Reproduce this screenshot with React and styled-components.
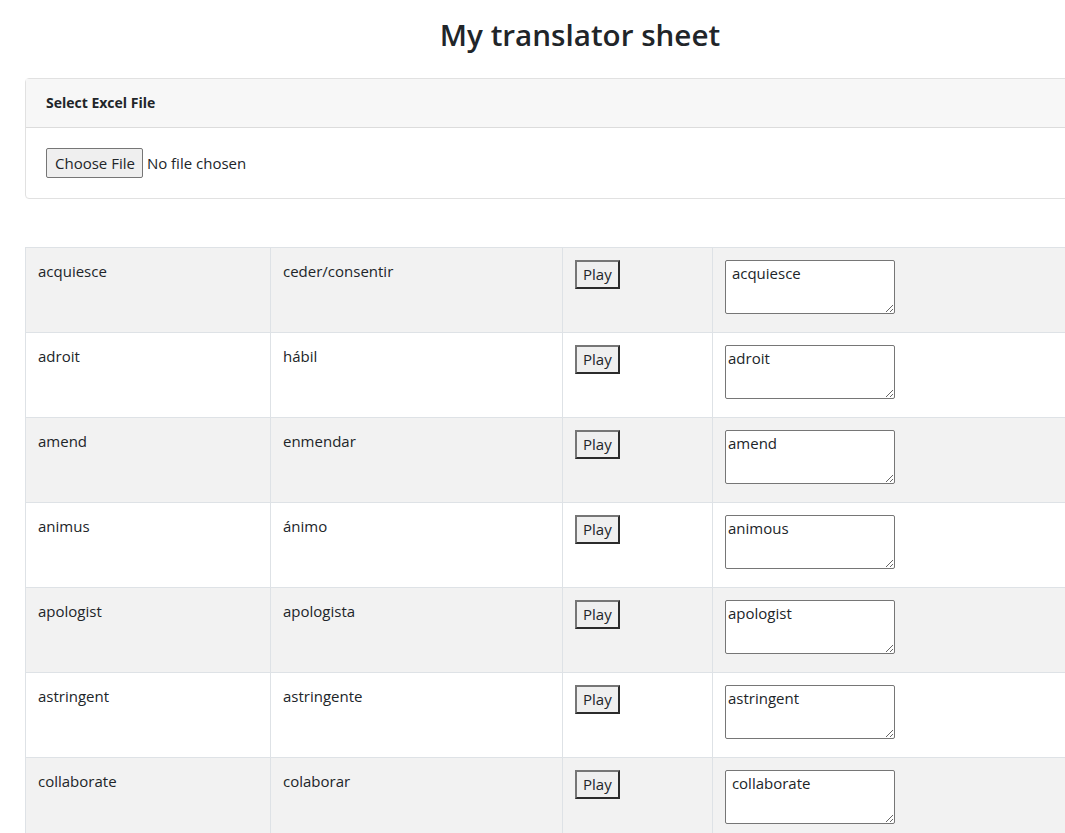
import React from "react";
import styled, { createGlobalStyle } from "styled-components";

const Global = createGlobalStyle`
  html, body { margin: 0; padding: 0; background: #fff; }
  body {
    font-family: "Open Sans", "Noto Sans", sans-serif;
    font-size: 15px;
    color: #212529;
  }
`;

const Container = styled.div`
  width: 1110px;
  margin-left: 25px;
`;

const Title = styled.h2`
  margin: 16px 0 24px;
  font-size: 29.6px;
  font-weight: 600;
  line-height: 38px;
  text-align: center;
`;

const Card = styled.div`
  border: 1px solid #e1e1e1;
  border-radius: 4px;
  background: #fff;
  margin-bottom: 48px;
`;

const CardHeader = styled.div`
  background: #f7f7f7;
  border-bottom: 1px solid #dcdcdc;
  padding: 12px 20px;
  line-height: 24px;
  font-size: 14px;
  font-weight: 700;
`;

const CardBody = styled.div`
  padding: 20px;
  display: flex;
  align-items: center;
  height: 30px;
`;

const FileButton = styled.button`
  font-family: inherit;
  font-size: 15px;
  color: #212529;
  background: #efefef;
  border: 1px solid #767676;
  border-radius: 2px;
  height: 30px;
  padding: 0 7px 0 8px;
  margin-right: 4px;
`;

const FileText = styled.span`
  font-size: 15px;
`;

const Table = styled.table`
  width: 1110px;
  border-collapse: collapse;
  table-layout: fixed;
`;

const Row = styled.tr`
  background: ${(p) => (p.$striped ? "#f2f2f2" : "#fff")};
  height: 85px;
`;

const Cell = styled.td`
  border: 1px solid #dee2e6;
  padding: 12px;
  vertical-align: top;
  line-height: 22px;
  font-size: 15px;
`;

const PlayButton = styled.button`
  font-family: inherit;
  font-size: 15px;
  color: #212529;
  background: #efefef;
  border: 2px solid;
  border-color: #767676 #2b2b2b #2b2b2b #767676;
  padding: 0 6px;
  height: 29px;
  line-height: 23px;
`;

const Answer = styled.textarea`
  display: block;
  width: 170px;
  height: 54px;
  box-sizing: border-box;
  border: 1px solid #767676;
  border-radius: 2px;
  font-family: inherit;
  font-size: 15px;
  color: #212529;
  padding: 2px;
  background: #fff;
  margin: 0;
`;

const rows = [
  ["acquiesce", "ceder/consentir", " acquiesce"],
  ["adroit", "hábil", "adroit"],
  ["amend", "enmendar", "amend"],
  ["animus", "ánimo", "animous"],
  ["apologist", "apologista", "apologist"],
  ["astringent", "astringente", "astringent"],
  ["collaborate", "colaborar", " collaborate"],
];

export default function App() {
  return (
    <>
      <Global />
      <Container>
        <Title>My translator sheet</Title>
        <Card>
          <CardHeader>Select Excel File</CardHeader>
          <CardBody>
            <FileButton type="button">Choose File</FileButton>
            <FileText>No file chosen</FileText>
          </CardBody>
        </Card>
        <Table>
          <colgroup>
            <col style={{ width: 245 }} />
            <col style={{ width: 292 }} />
            <col style={{ width: 150 }} />
            <col />
          </colgroup>
          <tbody>
            {rows.map(([en, es, typed], i) => (
              <Row key={en} $striped={i % 2 === 0}>
                <Cell>{en}</Cell>
                <Cell>{es}</Cell>
                <Cell>
                  <PlayButton type="button">Play</PlayButton>
                </Cell>
                <Cell>
                  <Answer defaultValue={typed} />
                </Cell>
              </Row>
            ))}
          </tbody>
        </Table>
      </Container>
    </>
  );
}
